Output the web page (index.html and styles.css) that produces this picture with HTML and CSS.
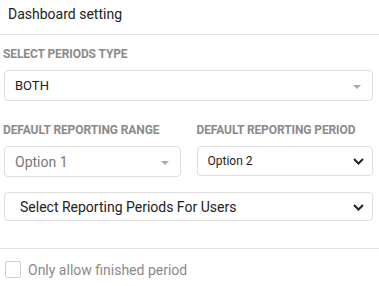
FILE: index.html
```html
<!DOCTYPE html>
<html>
<head>
<meta charset="utf-8">
<link rel="stylesheet" href="styles.css">
</head>
<body>
<div class="panel">
  <div class="header">Dashboard setting</div>
  <div class="body">
    <div class="field">
      <div class="label">SELECT PERIODS TYPE</div>
      <div class="select">
        <span class="value dark">BOTH</span>
        <span class="caret"></span>
      </div>
    </div>
    <div class="row">
      <div class="field col">
        <div class="label">DEFAULT REPORTING RANGE</div>
        <div class="select">
          <span class="value muted">Option 1</span>
          <span class="caret"></span>
        </div>
      </div>
      <div class="field col">
        <div class="label">DEFAULT REPORTING PERIOD</div>
        <div class="select native">
          <span class="value small">Option 2</span>
          <svg class="chev" width="11" height="7" viewBox="0 0 11 7"><path d="M1 1l4.5 4.5L10 1" fill="none" stroke="#222" stroke-width="2"/></svg>
        </div>
      </div>
    </div>
    <div class="select native wide">
      <span class="value big">Select Reporting Periods For Users</span>
      <svg class="chev" width="11" height="7" viewBox="0 0 11 7"><path d="M1 1l4.5 4.5L10 1" fill="none" stroke="#222" stroke-width="2"/></svg>
    </div>
  </div>
  <div class="footer">
    <label class="check"><span class="box"></span><span>Only allow finished period</span></label>
  </div>
</div>
</body>
</html>
```
FILE: styles.css
```css
* { box-sizing: border-box; }
body {
  margin: 0;
  font-family: Roboto, "Liberation Sans", sans-serif;
  background: #fff;
  color: #222;
}
.panel { width: 379px; }
.header {
  height: 35px;
  padding: 6px 0 0 8px;
  font-size: 14px;
  color: #222;
  border-bottom: 1px solid #e2e2e2;
}
.body {
  padding: 12px 6px 0 4px;
}
.label {
  font-size: 12px;
  font-weight: 700;
  color: #8a8a8a;
  margin-left: -1px;
  height: 14px;
  line-height: 14px;
  margin-bottom: 9px;
  white-space: nowrap;
  letter-spacing: -0.1px;
}
.select {
  position: relative;
  height: 31px;
  border: 1px solid #dedede;
  border-radius: 4px;
  display: flex;
  align-items: center;
  padding-left: 10px;
}
.value { font-size: 13px; }
.dark { color: #222; }
.muted { color: #777; font-size: 14px; }
.small { font-size: 12px; color: #222; }
.big { font-size: 14px; color: #222; padding-left: 5px; }
.caret {
  position: absolute;
  right: 11px;
  top: 14px;
  width: 0; height: 0;
  border-left: 4px solid transparent;
  border-right: 4px solid transparent;
  border-top: 4px solid #aaa;
}
.chev { position: absolute; right: 8px; top: 11px; }
.row {
  display: flex;
  gap: 16px;
  margin-top: 22px;
}
.col { flex: 1 1 0; min-width: 0; }
.col:last-child .label { margin-left: 0; }
.native { height: 30px; }
.wide { margin-top: 15px; height: 29px; }
.wide .chev { top: 11px; }
.footer {
  margin-top: 27px;
  border-top: 1px solid #e2e2e2;
  padding: 12px 0 0 5px;
}
.check {
  display: flex;
  align-items: center;
  gap: 7px;
  font-size: 14px;
  color: #8a8a8a;
}
.box {
  width: 16px; height: 17px;
  border: 1px solid #cfcfcf;
  border-radius: 2px;
}
```
